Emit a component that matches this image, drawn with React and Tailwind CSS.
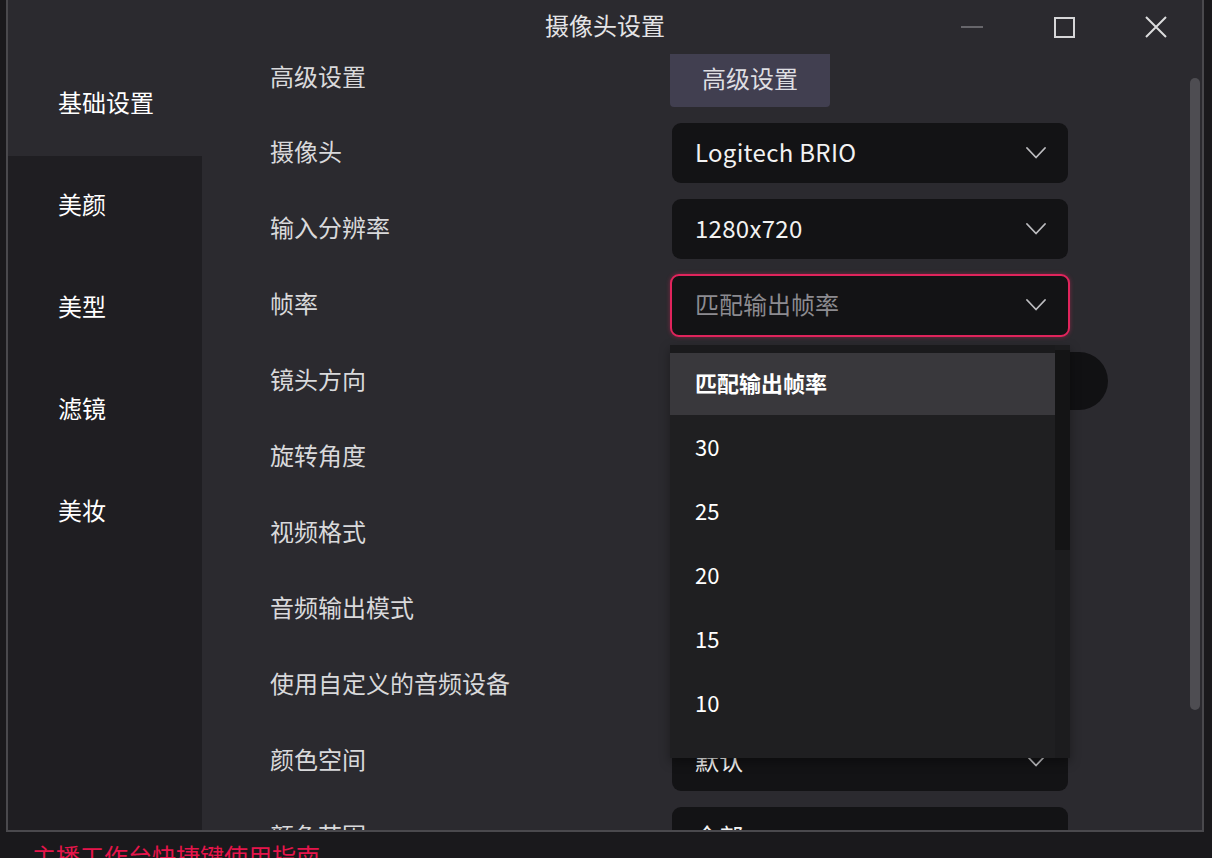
import React from "react";

const FONT = { fontFamily: '"Noto Sans CJK SC", "Noto Sans", sans-serif' };

function Chevron({ className = "" }) {
  return (
    <svg width="20" height="12" viewBox="0 0 20 12" className={className} fill="none">
      <path d="M1 1 L10 10.5 L19 1" stroke="#bdbdc0" strokeWidth="1.8" strokeLinecap="round" strokeLinejoin="round" />
    </svg>
  );
}

function Select({ value, placeholder, active }) {
  const base = "flex items-center justify-between rounded-[9px] bg-[#131315] pl-[23px] pr-[22px]";
  if (active) {
    return (
      <div className={`${base} h-[63px] w-[400px] shrink-0 border-2 border-[#e0245c] shadow-[0_0_4px_rgba(224,36,92,0.45)] pl-[21px] pr-[20px]`}>
        <span className="pb-[3px] text-[24px] text-[#8c8b90]">{placeholder}</span>
        <Chevron />
      </div>
    );
  }
  return (
    <div className={`${base} ml-[2px] h-[60px] w-[396px] shrink-0`}>
      <span className="pb-[3px] text-[24px] tracking-[0.3px] text-[#f2f2f2]">{value}</span>
      <Chevron />
    </div>
  );
}

const rows = [
  { label: "摄像头", control: <Select value="Logitech BRIO" /> },
  { label: "输入分辨率", control: <Select value="1280x720" /> },
  { label: "帧率", control: <Select active placeholder="匹配输出帧率" /> },
  {
    label: "镜头方向",
    control: <div className="ml-[328px] h-[58px] w-[110px] shrink-0 rounded-full bg-[#111113]" />,
  },
  { label: "旋转角度", control: null },
  { label: "视频格式", control: null },
  { label: "音频输出模式", control: null },
  { label: "使用自定义的音频设备", control: null },
  { label: "颜色空间", control: <Select value="默认" /> },
  { label: "颜色范围", control: <Select value="全部" /> },
];

const navItems = ["美颜", "美型", "滤镜", "美妆"];
const rates = ["30", "25", "20", "15", "10"];

export default function App() {
  return (
    <div
      className="h-[858px] w-[1212px] overflow-hidden bg-[#1a191c] pl-[6px]"
      style={FONT}
    >
      {/* window */}
      <div className="relative flex h-[832px] w-[1198px] flex-col border-x-2 border-b-2 border-[#4a494d] bg-[#2b2a2f]">
        {/* title bar */}
        <div className="grid h-[54px] shrink-0 grid-cols-[1fr_auto_1fr] items-center">
          <div />
          <div className="pb-[4px] text-[24px] text-[#e4e4e6]">摄像头设置</div>
          <div className="flex justify-end">
            <div className="flex h-[54px] w-[92px] items-center justify-center">
              <div className="h-[2px] w-[22px] bg-[#67666b]" />
            </div>
            <div className="flex h-[54px] w-[92px] items-center justify-center">
              <div className="h-[21px] w-[21px] border-2 border-[#d6d6d8]" />
            </div>
            <div className="flex h-[54px] w-[92px] items-center justify-center">
              <svg width="24" height="24" viewBox="0 0 24 24" fill="none">
                <path d="M2 2 L22 22 M22 2 L2 22" stroke="#dcdcde" strokeWidth="2" />
              </svg>
            </div>
          </div>
        </div>

        {/* body */}
        <div className="flex min-h-0 flex-1">
          {/* sidebar */}
          <div className="flex w-[194px] shrink-0 flex-col">
            <div className="flex h-[102px] items-center pb-[6px] pl-[50px] text-[24px] text-white">基础设置</div>
            <div className="flex-1 bg-[#1f1e22]">
              {navItems.map((n) => (
                <div key={n} className="flex h-[102px] items-center pb-[6px] pl-[50px] text-[24px] text-white">
                  {n}
                </div>
              ))}
            </div>
          </div>

          {/* main panel */}
          <div className="flex min-w-0 flex-1">
            <div className="min-w-0 flex-1 overflow-hidden pl-[68px]">
              <div className="flex h-[61px] items-start">
                <div className="w-[400px] pt-[4px] text-[24px] text-[#d9d9db]">高级设置</div>
                <div className="flex h-[53px] w-[160px] items-center justify-center rounded-b-[4px] bg-[#413f50] pb-[6px] text-[24px] text-[#dedee2]">
                  高级设置
                </div>
              </div>
              {rows.map((r) => (
                <div key={r.label} className="flex h-[76px] items-center">
                  <div className="w-[400px] shrink-0 pb-[4px] text-[24px] text-[#d9d9db]">{r.label}</div>
                  <div className="flex w-[400px] shrink-0 items-center">{r.control}</div>
                </div>
              ))}
            </div>
            {/* panel scrollbar */}
            <div className="w-[14px] shrink-0 pl-[2px] pt-[24px]">
              <div className="h-[632px] w-[10px] rounded-full bg-[#4e4d52]" />
            </div>
          </div>
        </div>

        {/* open frame-rate list */}
        <div className="absolute left-[662px] top-[345px] flex h-[413px] w-[400px] bg-[#1f1f21] shadow-[0_4px_10px_rgba(0,0,0,0.35)]">
          <div className="flex min-w-0 flex-1 flex-col">
            <div className="h-[8px] bg-[#1a1a1c]" />
            <div className="flex h-[62px] items-center bg-[#39383c] pb-[3px] pl-[25px] text-[22px] font-bold text-white">
              匹配输出帧率
            </div>
            {rates.map((r) => (
              <div key={r} className="flex h-[64px] items-center pb-[1px] pl-[25px] text-[22px] text-white">
                {r}
              </div>
            ))}
          </div>
          <div className="w-[15px] shrink-0 bg-[#1c1c1e] pt-[5px]">
            <div className="h-[200px] w-full bg-[#141415]" />
          </div>
        </div>
      </div>

      {/* footer link */}
      <div className="pl-[26px] pt-[12px] text-[24px] leading-none text-[#e5154b]">主播工作台快捷键使用指南</div>
    </div>
  );
}
